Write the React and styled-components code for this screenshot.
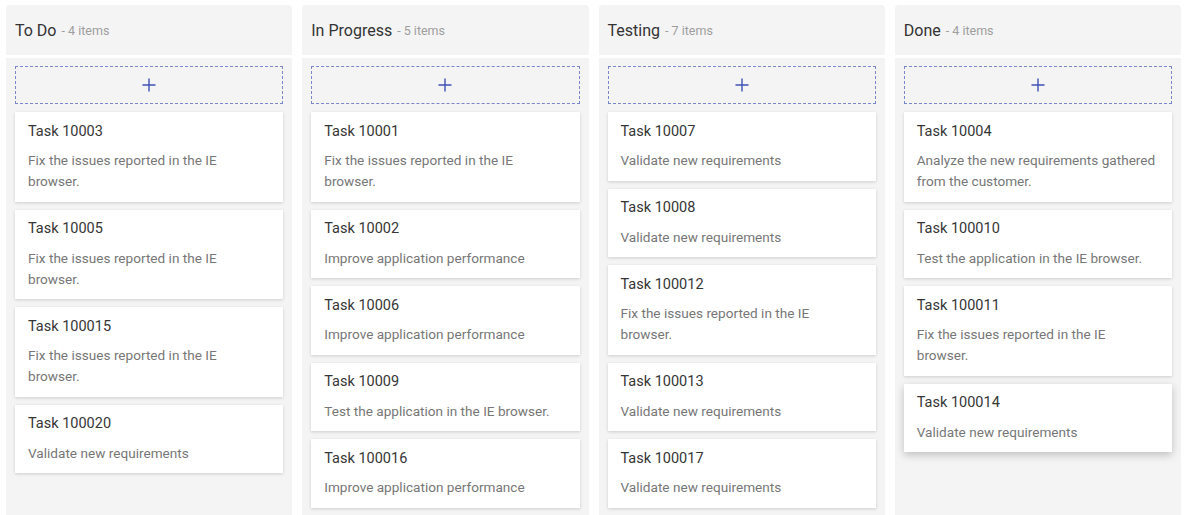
import React from 'react';
import styled, { createGlobalStyle } from 'styled-components';

const GlobalStyle = createGlobalStyle`
  html, body {
    margin: 0;
    padding: 0;
    background: #fff;
    font-family: Roboto, "Liberation Sans", sans-serif;
    overflow: hidden;
  }
`;

const Board = styled.div`
  display: flex;
  gap: 10px;
  padding: 5px 9px 0 6px;
  height: 515px;
  box-sizing: border-box;
`;

const Column = styled.div`
  flex: 1;
  display: flex;
  flex-direction: column;
  gap: 3px;
  min-width: 0;
`;

const ColumnHeader = styled.div`
  height: 50px;
  background: #f4f4f4;
  border-radius: 4px 4px 0 0;
  display: flex;
  align-items: center;
  padding: 0 9px;
  box-sizing: border-box;
`;

const ColumnTitle = styled.span`
  font-size: 16px;
  color: #333;
`;

const ItemCount = styled.span`
  font-size: 12.5px;
  color: #9e9e9e;
  margin-left: 5px;
`;

const ColumnBody = styled.div`
  flex: 1;
  background: #f4f4f4;
  padding: 8px 9px;
  display: flex;
  flex-direction: column;
  gap: 8px;
  overflow: hidden;
`;

const AddButton = styled.div`
  height: 38px;
  box-sizing: border-box;
  border: 1px dashed #7b86c9;
  display: flex;
  align-items: center;
  justify-content: center;
  flex-shrink: 0;
`;

const Card = styled.div`
  background: #fff;
  padding: 9.5px 12px 9.5px 13px;
  flex-shrink: 0;
  box-shadow: ${p => p.$raised
    ? '0 3px 8px rgba(0, 0, 0, 0.22)'
    : '0 1px 3px rgba(0, 0, 0, 0.16)'};
`;

const CardTitle = styled.div`
  font-size: 14.5px;
  line-height: 20px;
  color: #363636;
`;

const CardText = styled.div`
  margin-top: 8.5px;
  font-size: 13.6px;
  line-height: 21px;
  color: #777;
`;

const PlusIcon = () => (
  <svg width="14" height="14" viewBox="0 0 14 14">
    <path d="M7 0.5v13M0.5 7h13" stroke="#3f51b5" strokeWidth="1.4" fill="none" />
  </svg>
);

const columns = [
  {
    title: 'To Do',
    cards: [
      ['Task 10003', 'Fix the issues reported in the IE browser.'],
      ['Task 10005', 'Fix the issues reported in the IE browser.'],
      ['Task 100015', 'Fix the issues reported in the IE browser.'],
      ['Task 100020', 'Validate new requirements'],
    ],
  },
  {
    title: 'In Progress',
    cards: [
      ['Task 10001', 'Fix the issues reported in the IE browser.'],
      ['Task 10002', 'Improve application performance'],
      ['Task 10006', 'Improve application performance'],
      ['Task 10009', 'Test the application in the IE browser.'],
      ['Task 100016', 'Improve application performance'],
    ],
  },
  {
    title: 'Testing',
    count: 7,
    cards: [
      ['Task 10007', 'Validate new requirements'],
      ['Task 10008', 'Validate new requirements'],
      ['Task 100012', 'Fix the issues reported in the IE browser.'],
      ['Task 100013', 'Validate new requirements'],
      ['Task 100017', 'Validate new requirements'],
    ],
  },
  {
    title: 'Done',
    cards: [
      ['Task 10004', 'Analyze the new requirements gathered from the customer.'],
      ['Task 100010', 'Test the application in the IE browser.'],
      ['Task 100011', 'Fix the issues reported in the IE browser.'],
      ['Task 100014', 'Validate new requirements', true],
    ],
  },
];

export default function App() {
  return (
    <>
      <GlobalStyle />
      <Board>
        {columns.map(col => (
          <Column key={col.title}>
            <ColumnHeader>
              <ColumnTitle>{col.title}</ColumnTitle>
              <ItemCount>- {col.count || col.cards.length} items</ItemCount>
            </ColumnHeader>
            <ColumnBody>
              <AddButton>
                <PlusIcon />
              </AddButton>
              {col.cards.map(([title, text, raised]) => (
                <Card key={title} $raised={raised}>
                  <CardTitle>{title}</CardTitle>
                  <CardText>{text}</CardText>
                </Card>
              ))}
            </ColumnBody>
          </Column>
        ))}
      </Board>
    </>
  );
}
